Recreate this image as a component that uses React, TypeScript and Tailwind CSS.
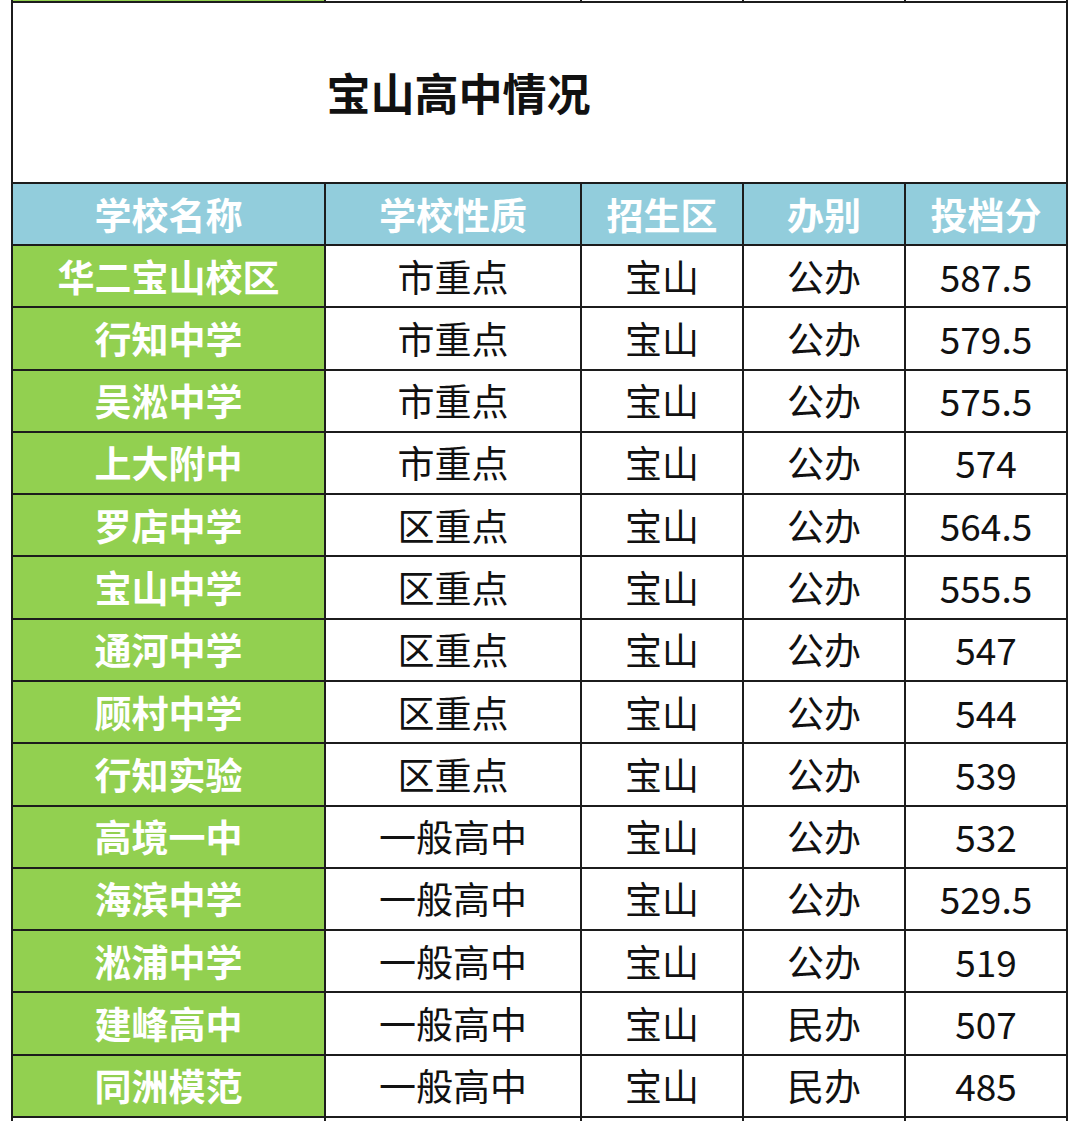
const rows: [string, string, string, string, string][] = [
  ["华二宝山校区", "市重点", "宝山", "公办", "587.5"],
  ["行知中学", "市重点", "宝山", "公办", "579.5"],
  ["吴淞中学", "市重点", "宝山", "公办", "575.5"],
  ["上大附中", "市重点", "宝山", "公办", "574"],
  ["罗店中学", "区重点", "宝山", "公办", "564.5"],
  ["宝山中学", "区重点", "宝山", "公办", "555.5"],
  ["通河中学", "区重点", "宝山", "公办", "547"],
  ["顾村中学", "区重点", "宝山", "公办", "544"],
  ["行知实验", "区重点", "宝山", "公办", "539"],
  ["高境一中", "一般高中", "宝山", "公办", "532"],
  ["海滨中学", "一般高中", "宝山", "公办", "529.5"],
  ["淞浦中学", "一般高中", "宝山", "公办", "519"],
  ["建峰高中", "一般高中", "宝山", "民办", "507"],
  ["同洲模范", "一般高中", "宝山", "民办", "485"],
];

const headers = ["学校名称", "学校性质", "招生区", "办别", "投档分"];

const cols = "grid grid-cols-[311px_254px_160px_160px_160px] gap-[2px]";

export default function App() {
  return (
    <div
      className="min-h-[1121px] w-[1080px] overflow-hidden bg-white"
      style={{ fontFamily: '"Noto Sans CJK SC", "Noto Sans", sans-serif' }}
    >
      <div className="ml-[11px] flex w-[1057px] flex-col gap-[2px] bg-[#1c1c1c] px-[2px]">
        {/* sliver of previous row */}
        <div className={`${cols} h-[1px]`}>
          <div className="bg-[#92d050]" />
          <div className="bg-white" />
          <div className="bg-white" />
          <div className="bg-white" />
          <div className="bg-white" />
        </div>

        {/* title */}
        <div className="flex h-[179px] items-center bg-white pr-[162px]">
          <h1 className="flex-1 pb-[2px] text-center text-[44px] font-bold leading-none text-[#111]">
            宝山高中情况
          </h1>
        </div>

        {/* header */}
        <div className={`${cols} h-[60px]`}>
          {headers.map((h) => (
            <div
              key={h}
              className="flex items-center justify-center bg-[#92cddc] text-[37px] font-bold leading-none text-white"
            >
              {h}
            </div>
          ))}
        </div>

        {/* body */}
        <div className={`${cols} h-[870px] grid-rows-14`}>
          {rows.map((r) => (
            <>
              <div
                key={r[0]}
                className="flex items-center justify-center bg-[#92d050] text-[37px] font-bold leading-none text-white"
              >
                {r[0]}
              </div>
              {r.slice(1).map((c, i) => (
                <div
                  key={r[0] + i}
                  className="flex items-center justify-center bg-white text-[37px] leading-none text-[#111]"
                >
                  {c}
                </div>
              ))}
            </>
          ))}
        </div>

        {/* start of next row */}
        <div className={`${cols} h-[10px]`}>
          <div className="bg-white" />
          <div className="bg-white" />
          <div className="bg-white" />
          <div className="bg-white" />
          <div className="bg-white" />
        </div>
      </div>
    </div>
  );
}
